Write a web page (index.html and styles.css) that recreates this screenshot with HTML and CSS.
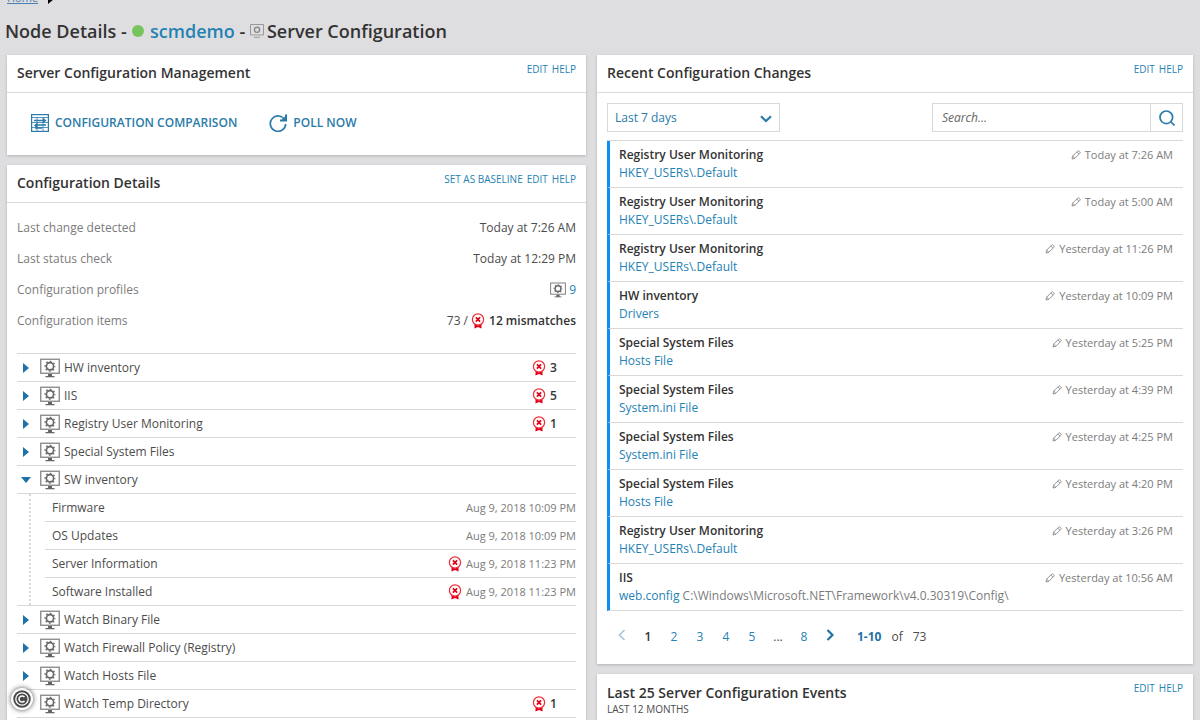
FILE: index.html
```html
<!DOCTYPE html>
<html lang="en">
<head>
  <meta charset="UTF-8" />
  <meta name="viewport" content="width=device-width, initial-scale=1.0"/>
  <title>Node Details - scmdemo - Server Configuration</title>
  <link rel="stylesheet" href="styles.css">
</head>
<body>

<!-- shared icons -->
<svg class="sprite" aria-hidden="true">
  <symbol id="i-monitor" viewBox="0 0 20 20">
    <rect x="0.75" y="1.25" width="18.5" height="14" fill="#fff" stroke="#858585" stroke-width="1.3"/>
    <path d="M8 16h4v2h2.500v1.200h-9V18H8z" fill="#666"/>
    <circle cx="10" cy="8.300" r="3.600" fill="none" stroke="#686868" stroke-width="1.700"/>
    <circle cx="10" cy="8.300" r="4.900" fill="none" stroke="#686868" stroke-width="1.300" stroke-dasharray="1.800 2.050" stroke-dashoffset="0.900"/>
  </symbol>
  <symbol id="i-monitor-light" viewBox="0 0 14 14">
    <path d="M.5.500h13v10.500H.5zM4 13.300h6" fill="none" stroke="#999"/>
    <circle cx="7" cy="5.800" r="2.600" fill="none" stroke="#8a8a8a" stroke-width="1.400"/>
  </symbol>
  <symbol id="i-badge" viewBox="0 0 14 16">
    <path d="M3.500 11v4.600L7 14l3.500 1.600V11L7 12.500z" fill="#e2001a"/>
    <circle cx="7" cy="6.500" r="5.600" fill="#fff" stroke="#ee2b34" stroke-width="1.200"/>
    <path d="M4.900 4.400l4.200 4.200M9.100 4.400L4.900 8.600" stroke="#dd0015" stroke-width="1.700"/>
  </symbol>
  <symbol id="i-pencil" viewBox="0 0 10 10">
    <path d="M1 9l.7-2.900L6.600 1.200q.8-.8 1.600 0l.6.600q.8.800 0 1.600L3.900 8.300zM5.800 2l2.200 2.200M1.700 6.200l2.100 2" fill="none" stroke="#888" stroke-width="0.900"/>
  </symbol>
  <symbol id="i-right" viewBox="0 0 6 10"><path d="M0 0v10l6-5z" fill="#1f72a6"/></symbol>
  <symbol id="i-down" viewBox="0 0 10 6"><path d="M0 0h10L5 6z" fill="#1f72a6"/></symbol>
</svg>

<nav class="breadcrumb">
  <a href="#">Home</a>
  <svg width="6" height="10"><use href="#i-right"/></svg>
</nav>

<h1 class="page-title">
  Node Details - <span class="status-dot"></span> <a href="#">scmdemo</a> -
  <svg class="title-icon" width="14" height="14"><use href="#i-monitor-light"/></svg>Server Configuration
</h1>

<main class="columns">

  <div class="column">
    <section class="card">
      <header class="card-header">
        <h2>Server Configuration Management</h2>
        <div class="card-links"><a href="#">EDIT</a><a href="#">HELP</a></div>
      </header>
      <div class="actions">
        <button type="button">
          <svg width="18" height="18" viewBox="0 0 18 18" fill="none" stroke="#2a7ba9">
            <rect x="0.600" y="0.600" width="16.800" height="16.800" stroke-width="1.200"/>
            <path d="M1 3.500h16M1 8.500h16M1 13.500h16M6 3v14M12 3v14" stroke-width="0.800"/>
            <path d="M3 6.500h11M4 11h11M4 14h7" stroke-width="1.400"/>
            <path d="M12 3.800l3.500 2.700L12 9.200zM6.500 8.500L3 11.500l3.500 3z" fill="#2a7ba9" stroke="none"/>
          </svg>
          CONFIGURATION COMPARISON
        </button>
        <button type="button">
          <svg width="18" height="18" viewBox="0 0 18 18" fill="none" stroke="#2a7ba9" stroke-width="1.700">
            <path d="M15.800 6A7.700 7.700 0 1 0 16.700 10"/>
            <path d="M17 0.500V6.600h-6" stroke-width="2"/>
            <path d="M17 1.500v5h-5z" fill="#2a7ba9" stroke="none"/>
          </svg>
          POLL NOW
        </button>
      </div>
    </section>

    <section class="card">
      <header class="card-header">
        <h2>Configuration Details</h2>
        <div class="card-links"><a href="#">SET AS BASELINE</a><a href="#">EDIT</a><a href="#">HELP</a></div>
      </header>
      <div class="details">
        <dl class="facts">
          <div><dt>Last change detected</dt><dd>Today at 7:26 AM</dd></div>
          <div><dt>Last status check</dt><dd>Today at 12:29 PM</dd></div>
          <div><dt>Configuration profiles</dt><dd><svg width="16" height="16"><use href="#i-monitor"/></svg> <a href="#">9</a></dd></div>
          <div><dt>Configuration items</dt><dd>73 / <svg width="14" height="16"><use href="#i-badge"/></svg> <strong>12 mismatches</strong></dd></div>
        </dl>

        <ul class="tree">
          <li class="node">
            <button type="button" aria-label="Expand HW inventory"><svg width="6" height="10"><use href="#i-right"/></svg></button>
            <svg width="20" height="20"><use href="#i-monitor"/></svg>
            <span class="name">HW inventory</span>
            <span class="count"><svg width="14" height="16"><use href="#i-badge"/></svg>3</span>
          </li>
          <li class="node">
            <button type="button" aria-label="Expand IIS"><svg width="6" height="10"><use href="#i-right"/></svg></button>
            <svg width="20" height="20"><use href="#i-monitor"/></svg>
            <span class="name">IIS</span>
            <span class="count"><svg width="14" height="16"><use href="#i-badge"/></svg>5</span>
          </li>
          <li class="node">
            <button type="button" aria-label="Expand Registry User Monitoring"><svg width="6" height="10"><use href="#i-right"/></svg></button>
            <svg width="20" height="20"><use href="#i-monitor"/></svg>
            <span class="name">Registry User Monitoring</span>
            <span class="count"><svg width="14" height="16"><use href="#i-badge"/></svg>1</span>
          </li>
          <li class="node">
            <button type="button" aria-label="Expand Special System Files"><svg width="6" height="10"><use href="#i-right"/></svg></button>
            <svg width="20" height="20"><use href="#i-monitor"/></svg>
            <span class="name">Special System Files</span>
          </li>
          <li class="node">
            <button type="button" aria-label="Collapse SW inventory"><svg width="10" height="6"><use href="#i-down"/></svg></button>
            <svg width="20" height="20"><use href="#i-monitor"/></svg>
            <span class="name">SW inventory</span>
          </li>
          <li class="branch">
            <ul>
              <li><span class="name">Firmware</span><time>Aug 9, 2018 10:09 PM</time></li>
              <li><span class="name">OS Updates</span><time>Aug 9, 2018 10:09 PM</time></li>
              <li><span class="name">Server Information</span><svg width="14" height="16"><use href="#i-badge"/></svg><time>Aug 9, 2018 11:23 PM</time></li>
              <li><span class="name">Software Installed</span><svg width="14" height="16"><use href="#i-badge"/></svg><time>Aug 9, 2018 11:23 PM</time></li>
            </ul>
          </li>
          <li class="node">
            <button type="button" aria-label="Expand Watch Binary File"><svg width="6" height="10"><use href="#i-right"/></svg></button>
            <svg width="20" height="20"><use href="#i-monitor"/></svg>
            <span class="name">Watch Binary File</span>
          </li>
          <li class="node">
            <button type="button" aria-label="Expand Watch Firewall Policy"><svg width="6" height="10"><use href="#i-right"/></svg></button>
            <svg width="20" height="20"><use href="#i-monitor"/></svg>
            <span class="name">Watch Firewall Policy (Registry)</span>
          </li>
          <li class="node">
            <button type="button" aria-label="Expand Watch Hosts File"><svg width="6" height="10"><use href="#i-right"/></svg></button>
            <svg width="20" height="20"><use href="#i-monitor"/></svg>
            <span class="name">Watch Hosts File</span>
          </li>
          <li class="node">
            <button type="button" aria-label="Expand Watch Temp Directory"><svg width="6" height="10"><use href="#i-right"/></svg></button>
            <svg width="20" height="20"><use href="#i-monitor"/></svg>
            <span class="name">Watch Temp Directory</span>
            <span class="count"><svg width="14" height="16"><use href="#i-badge"/></svg>1</span>
          </li>
        </ul>
      </div>
    </section>
  </div>

  <div class="column">
    <section class="card">
      <header class="card-header">
        <h2>Recent Configuration Changes</h2>
        <div class="card-links"><a href="#">EDIT</a><a href="#">HELP</a></div>
      </header>
      <div class="changes">
        <div class="filters">
          <div class="period">
            <select aria-label="Period">
              <option>Last 7 days</option>
            </select>
            <svg width="12" height="8" viewBox="0 0 12 8" fill="none" stroke="#2a7ba9" stroke-width="2.200"><path d="M1 1.300l5 4.700 5-4.700"/></svg>
          </div>
          <form class="search">
            <input type="text" placeholder="Search..." aria-label="Search changes">
            <button type="button" aria-label="Search">
              <svg width="16" height="16" viewBox="0 0 16 16" fill="none" stroke="#2a7ba9" stroke-width="1.700"><circle cx="7.300" cy="7.300" r="6.300"/><path d="M11.500 11.500l4 4"/></svg>
            </button>
          </form>
        </div>

        <ul class="change-list">
          <li>
            <div><strong>Registry User Monitoring</strong><a href="#">HKEY_USERs\.Default</a></div>
            <time><svg width="10" height="10"><use href="#i-pencil"/></svg>Today at 7:26 AM</time>
          </li>
          <li>
            <div><strong>Registry User Monitoring</strong><a href="#">HKEY_USERs\.Default</a></div>
            <time><svg width="10" height="10"><use href="#i-pencil"/></svg>Today at 5:00 AM</time>
          </li>
          <li>
            <div><strong>Registry User Monitoring</strong><a href="#">HKEY_USERs\.Default</a></div>
            <time><svg width="10" height="10"><use href="#i-pencil"/></svg>Yesterday at 11:26 PM</time>
          </li>
          <li>
            <div><strong>HW inventory</strong><a href="#">Drivers</a></div>
            <time><svg width="10" height="10"><use href="#i-pencil"/></svg>Yesterday at 10:09 PM</time>
          </li>
          <li>
            <div><strong>Special System Files</strong><a href="#">Hosts File</a></div>
            <time><svg width="10" height="10"><use href="#i-pencil"/></svg>Yesterday at 5:25 PM</time>
          </li>
          <li>
            <div><strong>Special System Files</strong><a href="#">System.ini File</a></div>
            <time><svg width="10" height="10"><use href="#i-pencil"/></svg>Yesterday at 4:39 PM</time>
          </li>
          <li>
            <div><strong>Special System Files</strong><a href="#">System.ini File</a></div>
            <time><svg width="10" height="10"><use href="#i-pencil"/></svg>Yesterday at 4:25 PM</time>
          </li>
          <li>
            <div><strong>Special System Files</strong><a href="#">Hosts File</a></div>
            <time><svg width="10" height="10"><use href="#i-pencil"/></svg>Yesterday at 4:20 PM</time>
          </li>
          <li>
            <div><strong>Registry User Monitoring</strong><a href="#">HKEY_USERs\.Default</a></div>
            <time><svg width="10" height="10"><use href="#i-pencil"/></svg>Yesterday at 3:26 PM</time>
          </li>
          <li>
            <div><strong>IIS</strong><a href="#">web.config</a> <span class="path">C:\Windows\Microsoft.NET\Framework\v4.0.30319\Config\</span></div>
            <time><svg width="10" height="10"><use href="#i-pencil"/></svg>Yesterday at 10:56 AM</time>
          </li>
        </ul>

        <nav class="pager" aria-label="Pages">
          <button type="button" aria-label="Previous page" disabled><svg width="8" height="12" viewBox="0 0 8 12" fill="none" stroke="#a3c8dc" stroke-width="1.700"><path d="M6.500 1L1.500 6l5 5"/></svg></button>
          <strong>1</strong>
          <a href="#">2</a>
          <a href="#">3</a>
          <a href="#">4</a>
          <a href="#">5</a>
          <span>...</span>
          <a href="#">8</a>
          <button type="button" aria-label="Next page"><svg width="8" height="12" viewBox="0 0 8 12" fill="none" stroke="#1f72a6" stroke-width="2.200"><path d="M1.500 1l5 5-5 5"/></svg></button>
          <div class="range"><b>1-10</b> <span>of</span> <span>73</span></div>
        </nav>
      </div>
    </section>

    <section class="card">
      <header class="card-header tall">
        <div>
          <h2>Last 25 Server Configuration Events</h2>
          <p>LAST 12 MONTHS</p>
        </div>
        <div class="card-links"><a href="#">EDIT</a><a href="#">HELP</a></div>
      </header>
    </section>
  </div>

</main>

<div class="copyright">
  <svg width="22" height="22" viewBox="0 0 22 22" fill="none">
    <circle cx="11" cy="11" r="9.500" fill="#4a4a4a" stroke="#fff" stroke-width="1.500"/>
    <circle cx="11" cy="11" r="6.200" stroke="#fff" stroke-width="1.300"/>
    <path d="M13.500 9a3.100 3.100 0 1 0 0 4" stroke="#fff" stroke-width="1.500"/>
  </svg>
</div>

</body>
</html>
```
FILE: styles.css
```css
* {
  box-sizing: border-box;
}

html {
  overflow: hidden;
}

body {
  margin: 0;
  background: #dedee0;
  color: #4c4c4c;
  font-family: "Open Sans", sans-serif;
  font-size: 12px;
  line-height: 18px;
}

h1, h2, p, ul, dl, dd {
  margin: 0;
  padding: 0;
}

ul {
  list-style: none;
}

a {
  color: #2482b4;
  text-decoration: none;
}

button {
  padding: 0;
  border: 0;
  background: none;
  font: inherit;
  cursor: pointer;
}

svg {
  flex: none;
}

strong {
  color: #333;
  font-weight: 600;
}

.sprite {
  position: absolute;
  width: 0;
  height: 0;
}

/* page head */

.breadcrumb {
  display: flex;
  align-items: flex-end;
  gap: 10px;
  height: 7px;
  padding-left: 7px;
  overflow: hidden;
  font-size: 11px;
}

.breadcrumb a {
  text-decoration: underline;
  color: #4a7fb0;
}

.breadcrumb svg {
  margin-bottom: 3px;
  filter: brightness(0);
}

.page-title {
  padding: 12px 5px 11px;
  color: #333;
  font-size: 18px;
  line-height: 25px;
  font-weight: 600;
}

.status-dot {
  display: inline-block;
  width: 12px;
  height: 12px;
  margin: 0 1px 1px;
  border-radius: 50%;
  background: #76c45c;
}

.title-icon {
  margin-right: 3px;
}

/* cards */

.columns {
  display: grid;
  grid-template-columns: 579fr 596fr;
  gap: 11px;
  padding: 0 7px;
}

.column {
  display: flex;
  flex-direction: column;
  gap: 10px;
  min-width: 0;
}

.card {
  background: #fff;
  box-shadow: 0 1px 3px rgba(0, 0, 0, 0.2);
}

.card-header {
  display: flex;
  justify-content: space-between;
  height: 38px;
  padding: 0 10px;
  border-bottom: 1px solid #dadada;
}

.card-header h2 {
  color: #333;
  font-size: 14px;
  line-height: 36px;
  font-weight: 600;
}

.card-header p {
  font-size: 10px;
  line-height: 12px;
}

.card-header.tall {
  height: 60px;
}

.card-header.tall h2 {
  padding-top: 9px;
  line-height: 20px;
}

.card-links {
  display: flex;
  gap: 4px;
  padding-top: 7px;
  font-size: 10px;
  line-height: 14px;
}

.actions {
  display: flex;
  gap: 32px;
  padding: 21px 24px 23px;
}

.actions button {
  display: flex;
  align-items: center;
  gap: 6px;
  color: #2a7ba9;
  font-weight: 600;
}

/* configuration details */

.details {
  padding: 9px 10px 20px;
}

.facts div {
  display: flex;
  justify-content: space-between;
  height: 31px;
  line-height: 31px;
}

.facts dt {
  color: #7c7c7c;
}

.facts dd {
  display: flex;
  align-items: center;
  gap: 3px;
}

.facts strong {
  padding-left: 1px;
}

.tree {
  margin-top: 17px;
  border-top: 1px solid #d8d8d8;
}

.node {
  display: flex;
  align-items: center;
  height: 28px;
  border-bottom: 1px solid #d8d8d8;
}

.node button {
  display: flex;
  justify-content: center;
  width: 18px;
  margin-right: 5px;
}

.name {
  flex: 1;
}

.node .name {
  padding-left: 4px;
}

.count {
  display: flex;
  align-items: center;
  gap: 4px;
  width: 44px;
  color: #333;
  font-weight: 600;
}

.branch {
  padding-left: 12px;
  border-bottom: 1px solid #d8d8d8;
}

.branch ul {
  padding-left: 14px;
  border-left: 2px dotted #d8d8d8;
}

.branch li {
  display: flex;
  align-items: center;
  gap: 4px;
  height: 28px;
  padding-left: 7px;
  border-bottom: 1px solid #d8d8d8;
}

.branch li:last-child {
  height: 27px;
  border-bottom: 0;
}

.branch time {
  color: #7c7c7c;
  font-size: 11px;
}

/* recent changes */

.changes {
  padding: 10px 10px 18px;
}

.filters {
  display: flex;
  justify-content: space-between;
  margin-bottom: 8px;
}

.period {
  position: relative;
  width: 173px;
}

.period select {
  width: 100%;
  height: 29px;
  padding: 0 7px;
  border: 1px solid #d8d8d8;
  border-radius: 0;
  background: #fff;
  color: #2a7ba9;
  font: inherit;
  appearance: none;
}

.period svg {
  position: absolute;
  top: 12px;
  right: 8px;
  pointer-events: none;
}

.search {
  display: flex;
  width: 251px;
  height: 29px;
  border: 1px solid #d8d8d8;
}

.search input {
  flex: 1;
  min-width: 0;
  padding: 0 9px;
  border: 0;
  font: inherit;
}

.search input::placeholder {
  color: #666;
  font-style: italic;
}

.search button {
  display: flex;
  align-items: center;
  justify-content: center;
  width: 32px;
  border-left: 1px solid #d8d8d8;
}

.change-list {
  border-top: 1px solid #d8d8d8;
}

.change-list li {
  display: flex;
  justify-content: space-between;
  height: 47px;
  padding: 5px 10px 0 9px;
  border-left: 3px solid #0c8ff0;
  border-bottom: 1px solid #d8d8d8;
}

.change-list strong {
  display: block;
}

.change-list time {
  display: flex;
  align-items: center;
  gap: 4px;
  height: 18px;
  color: #7c7c7c;
  font-size: 11px;
}

.path {
  color: #7c7c7c;
}

.pager {
  display: flex;
  align-items: center;
  padding: 17px 0 0 2px;
}

.pager > * {
  width: 26px;
  text-align: center;
}

.pager > .range {
  display: flex;
  gap: 10px;
  width: auto;
  padding-left: 14px;
}

.range b {
  color: #1f72a6;
}

/* floating copyright mark */

.copyright {
  position: fixed;
  left: 11px;
  bottom: 10px;
  height: 22px;
  border-radius: 50%;
  box-shadow: 0 0 5px rgba(0, 0, 0, 0.7);
}
```
